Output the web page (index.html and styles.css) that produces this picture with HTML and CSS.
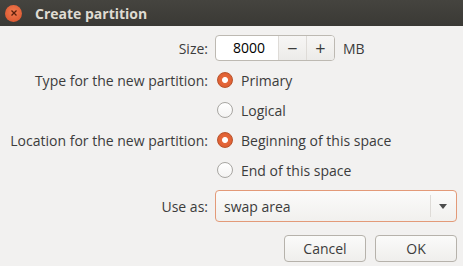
FILE: index.html
```html
<!DOCTYPE html>
<html lang="en">

<head>
    <meta charset="UTF-8" />
    <title>Create partition</title>
    <link rel="stylesheet" href="styles.css">
</head>

<body>

    <header class="titlebar">
        <span class="close-btn">
            <svg width="8" height="8" viewBox="0 0 8 8"><path d="M1.5 1.5 L6.5 6.5 M6.5 1.5 L1.5 6.5" stroke="#5a1f0d" stroke-width="1.3" /></svg>
        </span>
        <span class="title">Create partition</span>
    </header>

    <div class="dialog">
        <div class="form-grid">
            <label class="field-label size-row">Size:</label>
            <div class="size-row size-controls">
                <div class="spin">
                    <span class="spin-value">8000</span>
                    <button class="spin-btn">&minus;</button>
                    <button class="spin-btn">+</button>
                </div>
                <span class="unit">MB</span>
            </div>

            <label class="field-label radio-row">Type for the new partition:</label>
            <div class="radio-row"><span class="radio checked"></span>Primary</div>
            <span></span>
            <div class="radio-row"><span class="radio"></span>Logical</div>

            <label class="field-label radio-row">Location for the new partition:</label>
            <div class="radio-row"><span class="radio checked"></span>Beginning of this space</div>
            <span></span>
            <div class="radio-row"><span class="radio"></span>End of this space</div>

            <label class="field-label combo-row">Use as:</label>
            <div class="combo combo-row">
                <span class="combo-text">swap area</span>
                <span class="combo-arrow"></span>
            </div>
        </div>

        <div class="actions">
            <button class="btn">Cancel</button>
            <button class="btn">OK</button>
        </div>
    </div>

</body>

</html>
```

FILE: styles.css
```css
* {
    box-sizing: border-box;
}

body {
    margin: 0;
    font-family: 'Open Sans', 'DejaVu Sans', sans-serif;
    font-size: 14px;
    background-color: #f2f1f0;
    color: #3c3c3c;
    width: 463px;
    height: 266px;
    overflow: hidden;
}

.titlebar {
    height: 26px;
    background: linear-gradient(#45443f, #3a3935);
    display: flex;
    align-items: center;
    padding-left: 5px;
}

.close-btn {
    width: 17px;
    height: 17px;
    border-radius: 50%;
    background: radial-gradient(circle at 50% 40%, #f07a4f, #d8512a);
    display: flex;
    justify-content: center;
    align-items: center;
}

.title {
    margin-left: 13px;
    color: #dfdbd2;
    font-weight: bold;
    font-size: 14px;
}

.dialog {
    padding: 9px 6px 0 0;
}

.form-grid {
    display: grid;
    grid-template-columns: 208px 1fr;
    column-gap: 7px;
    align-items: center;
}

.field-label {
    text-align: right;
}

.size-row {
    height: 26px;
    margin-bottom: 4px;
    display: flex;
    align-items: center;
    justify-content: flex-end;
}

.size-controls {
    justify-content: flex-start;
}

.spin {
    display: flex;
    width: 120px;
    height: 26px;
    border: 1px solid #bdb9b2;
    border-radius: 4px;
    background: #fff;
    overflow: hidden;
}

.spin-value {
    flex: 1;
    text-align: center;
    line-height: 24px;
    color: #000;
    padding-left: 4px;
}

.spin-btn {
    width: 28px;
    border: none;
    border-left: 1px solid #dedbd7;
    background: linear-gradient(#f7f6f5, #ecebe9);
    font-family: inherit;
    font-size: 18px;
    color: #3c3c3c;
    padding: 0;
    line-height: 22px;
}

.unit {
    margin-left: 8px;
}

.radio-row {
    height: 30px;
    display: flex;
    align-items: center;
    justify-content: flex-end;
}

div.radio-row {
    justify-content: flex-start;
}

.radio {
    width: 16px;
    height: 16px;
    border-radius: 50%;
    border: 1px solid #a8a6a2;
    background: linear-gradient(#ffffff, #f4f3f2);
    margin: 0 8px 0 2px;
}

.radio.checked {
    border-color: #b9532b;
    background: radial-gradient(circle, #ffffff 0, #ffffff 2.5px, #e5683b 3.5px, #d9582c 100%);
}

.combo-row {
    height: 32px;
    margin-top: 5px;
    display: flex;
    align-items: center;
    justify-content: flex-end;
}

.combo {
    justify-content: space-between;
    border: 1px solid #e39a78;
    border-radius: 4px;
    background: linear-gradient(#fbfbfa, #f1f0ee);
    padding-left: 8px;
    width: 242px;
}

.combo-arrow {
    width: 26px;
    height: 22px;
    border-left: 1px solid #dedbd7;
    position: relative;
}

.combo-arrow::after {
    content: "";
    position: absolute;
    left: 8px;
    top: 9px;
    border-left: 4px solid transparent;
    border-right: 4px solid transparent;
    border-top: 5px solid #4c4c4c;
}

.actions {
    display: flex;
    justify-content: flex-end;
    gap: 9px;
    margin-top: 13px;
}

.btn {
    width: 82px;
    height: 27px;
    border: 1px solid #b6b2ab;
    border-radius: 4px;
    background: linear-gradient(#fbfbfa, #efeeec);
    font-family: inherit;
    font-size: 14px;
    color: #3c3c3c;
    padding: 0;
}
```
